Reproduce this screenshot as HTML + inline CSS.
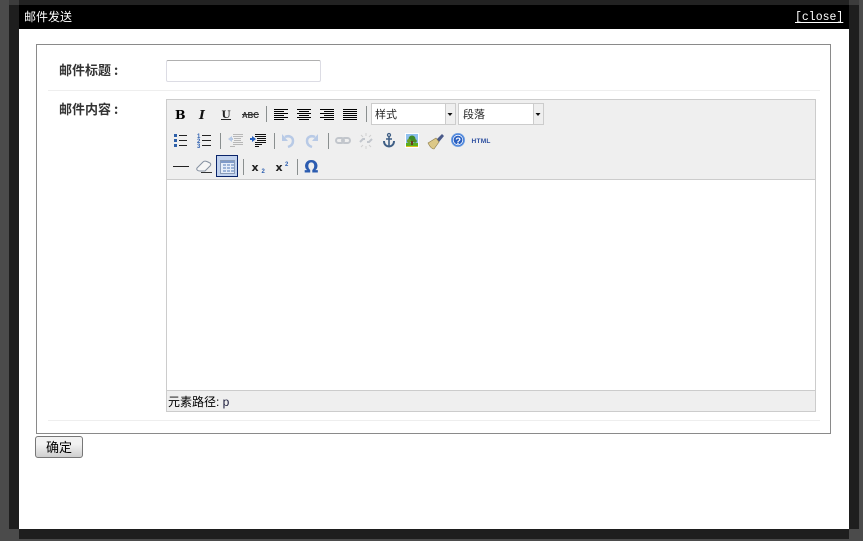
<!DOCTYPE html>
<html><head><meta charset="utf-8"><style>
html,body{margin:0;padding:0;width:863px;height:541px;overflow:hidden;background:#4b4b4b}
div,span{position:absolute;box-sizing:border-box}
body{font-family:"Liberation Sans","WenQuanYi Zen Hei","Noto Sans CJK SC",sans-serif;font-size:12px;color:#000}
.lb{font-family:"WenQuanYi Zen Hei","Noto Sans CJK SC",sans-serif;font-weight:bold;font-size:13px;color:#333;white-space:nowrap}
svg{position:absolute;left:0;top:0}
.s{font-family:"Liberation Sans",sans-serif;font-weight:bold}
.d{font-family:"DejaVu Serif",serif;font-weight:bold}
.j{font-family:"DejaVu Sans",sans-serif;font-weight:bold}
</style></head><body>
<div style="left:19px;top:0;width:830px;height:5px;background:#222"></div>
<div style="left:9px;top:5px;width:850px;height:524px;background:#1e1e1e"></div>
<div style="left:19px;top:529px;width:830px;height:10px;background:#1e1e1e"></div>
<div style="left:9px;top:0;width:10px;height:5px;background:#3c3c3c"></div>
<div style="left:849px;top:0;width:10px;height:5px;background:#3c3c3c"></div>
<div style="left:19px;top:5px;width:830px;height:24px;background:#000"></div>
<div style="left:19px;top:29px;width:830px;height:500px;background:#fff"></div>
<div style="left:24px;top:9px;color:#fff;font-size:12px;line-height:16px;white-space:nowrap">邮件发送</div>
<div style="left:795px;top:11px;color:#fff;font-family:'Liberation Mono',monospace;font-size:11.500px;line-height:14px;text-decoration:underline;text-underline-offset:2px;white-space:nowrap">[close]</div>

<div style="left:36px;top:44px;width:795px;height:390px;border:1px solid #8a8a8a;background:#fff"></div>
<div style="left:48px;top:90px;width:772px;height:1px;background:#eee"></div>
<div style="left:48px;top:420px;width:772px;height:1px;background:#eee"></div>
<div class="lb" style="left:59px;top:62px;line-height:16px">邮件标题</div><div class="lb" style="left:114px;top:62px;line-height:16px">:</div>
<div class="lb" style="left:59px;top:101px;line-height:16px">邮件内容</div><div class="lb" style="left:114px;top:101px;line-height:16px">:</div>
<div style="left:166px;top:60px;width:155px;height:22px;border:1px solid #dcdce4;border-top-color:#b0b0b0;border-radius:2px;background:#fff"></div>

<div style="left:166px;top:99px;width:650px;height:313px;border:1px solid #ccc;background:#fff"></div>
<div style="left:167px;top:100px;width:648px;height:80px;background:#efefef;border-bottom:1px solid #ccc"></div>
<div style="left:167px;top:390px;width:648px;height:21px;background:#efefef;border-top:1px solid #ccc"></div>
<div style="left:168px;top:394px;font-size:12px;line-height:16px;white-space:nowrap">元素路径: <span style="position:static;color:#1a1a3a">p</span></div>

<div style="left:371px;top:103px;width:85px;height:22px;border:1px solid #ccc;background:#fff"></div>
<div style="left:445px;top:104px;width:10px;height:20px;background:#efefef;border-left:1px solid #ccc"></div>
<div style="left:458px;top:103px;width:86px;height:22px;border:1px solid #ccc;background:#fff"></div>
<div style="left:533px;top:104px;width:10px;height:20px;background:#efefef;border-left:1px solid #ccc"></div>
<div style="left:375px;top:108px;font-size:11px;line-height:14px;color:#222">样式</div>
<div style="left:463px;top:108px;font-size:11px;line-height:14px;color:#222">段落</div>
<div style="left:216px;top:155px;width:22px;height:22px;border:1px solid #0a246a;background:#c1d2ee"></div>

<svg width="863" height="541" viewBox="0 0 863 541">
<g fill="#8a8f8f">
<rect x="266" y="106" width="1" height="16"/><rect x="366" y="106" width="1" height="16"/>
<rect x="220" y="133" width="1" height="16"/><rect x="274" y="133" width="1" height="16"/><rect x="328" y="133" width="1" height="16"/>
<rect x="243" y="159" width="1" height="16"/><rect x="297" y="159" width="1" height="16"/>
</g>
<!-- B I U ABC -->
<text class="d" x="175" y="119" font-size="12.500" fill="#000">B</text>
<text class="d" x="199" y="119" font-size="12.500" font-style="italic" fill="#111">I</text>
<text class="d" x="221.500" y="118" font-size="10.500" fill="#222">U</text>
<rect x="221" y="119" width="10" height="1" fill="#222"/>
<text class="s" x="242" y="118" font-size="7.800" fill="#333">ABC</text>
<rect x="242" y="114" width="17" height="1" fill="#333"/>
<!-- aligns -->
<g fill="#000">
<path d="M274 109h14v1h-14zM274 111h10v1h-10zM274 113h14v1h-14zM274 115h10v1h-10zM274 117h14v1h-14zM274 119h10v1h-10z"/>
<path d="M297 109h14v1h-14zM299 111h10v1h-10zM297 113h14v1h-14zM299 115h10v1h-10zM297 117h14v1h-14zM299 119h10v1h-10z"/>
<path d="M320 109h14v1h-14zM324 111h10v1h-10zM320 113h14v1h-14zM324 115h10v1h-10zM320 117h14v1h-14zM324 119h10v1h-10z"/>
<path d="M343 109h14v1h-14zM343 111h14v1h-14zM343 113h14v1h-14zM343 115h14v1h-14zM343 117h14v1h-14zM343 119h14v1h-14z"/>
</g>
<path d="M447.500 113h5l-2.500 3zM535.500 113h5l-2.500 3z" fill="#111"/>
<!-- lists -->
<g fill="#222"><path d="M179 135h8v1h-8zM179 140h8v1h-8zM179 145h8v1h-8zM202 135h9v1h-9zM202 140h9v1h-9zM202 145h9v1h-9z"/></g>
<g fill="#2d5fa8"><rect x="174" y="134" width="3" height="3"/><rect x="174" y="139" width="3" height="3"/><rect x="174" y="144" width="3" height="3"/></g>
<g class="s" font-size="6" fill="#2d5fb0"><text x="197" y="138">1</text><text x="197" y="143">2</text><text x="197" y="148">3</text></g>
<!-- outdent / indent -->
<g fill="#b8b8b8"><path d="M233 134h10v1h-10zM233 136h10v1h-10zM234 138h7v1h-7zM234 140h7v1h-7zM233 142h10v1h-10zM233 144h10v1h-10zM230 146h5v1h-5z"/></g>
<path d="M228 139l4-3v6z" fill="#b5c9e6"/><rect x="231" y="138" width="2" height="2" fill="#b5c9e6"/>
<g fill="#111"><path d="M255 134h11v1h-11zM255 136h11v1h-11zM257 138h9v1h-9zM257 140h9v1h-9zM255 142h11v1h-11zM255 144h7v1h-7zM255 146h4v1h-4z"/></g>
<path d="M256 139l-4-3v6z" fill="#2b63c0"/><rect x="250" y="138" width="3" height="2" fill="#2b63c0"/>
<!-- undo redo -->
<path d="M285 137c4-2 8 0 8 4 0 3-2 5-5 6" fill="none" stroke="#b8cae6" stroke-width="2.500"/><path d="M282 134v7h6z" fill="#b8cae6"/>
<path d="M315 137c-4-2-8 0-8 4 0 3 2 5 5 6" fill="none" stroke="#b8cae6" stroke-width="2.500"/><path d="M318 134v7h-6z" fill="#b8cae6"/>
<!-- link unlink -->
<g fill="none" stroke="#c2c6cc" stroke-width="2"><rect x="336" y="138" width="8" height="5" rx="2.500"/><rect x="342" y="138" width="8" height="5" rx="2.500"/>
<path d="M360 142l3-3h2M372 139l-3 3h-2"/></g>
<g stroke="#d0d0d0" stroke-width="1" fill="none"><path d="M361 135l2 2M366 133v3M371 135l-2 2M361 147l2-2M366 149v-3M371 147l-2-2"/></g>
<!-- anchor -->
<g fill="none" stroke="#3f5f85"><circle cx="389" cy="135" r="1.500" stroke-width="1.300"/><path d="M389 137v10M386 139h6" stroke-width="1.600"/><path d="M384 141c0 4 3 5.500 5 5.500s5-1.500 5-5.500" stroke-width="2"/></g>
<!-- image -->
<rect x="405" y="133" width="14" height="15" fill="#fff"/><rect x="406" y="134" width="12" height="9" fill="#8fc0ee"/><rect x="406" y="143" width="12" height="3" fill="#5cae1e"/><rect x="406" y="146" width="12" height="1" fill="#d8c020"/>
<circle cx="412" cy="139" r="3.500" fill="#3f8a28"/><circle cx="409" cy="141" r="2" fill="#6aa02a"/><circle cx="415" cy="141" r="1.800" fill="#4f8c20"/><rect x="411" y="141" width="2" height="4" fill="#6b3d1a"/>
<!-- cleanup broom -->
<path d="M436 140l6-6 2 2-5 6z" fill="#4a5a8a"/><path d="M428 143l8-5 3 4-5 7c-2 0-4-2-6-6z" fill="#dcc888" stroke="#8a7a4a" stroke-width=".6"/>
<!-- help -->
<circle cx="458" cy="140" r="6.500" fill="#3b78d8" stroke="#6d9de0" stroke-width="1"/><circle cx="458" cy="140" r="4.800" fill="#2a5fc0" stroke="#fff" stroke-width=".8"/>
<text class="s" x="455.300" y="144" font-size="9.500" fill="#fff">?</text>
<!-- html -->
<text class="s" x="471.500" y="143" font-size="6.600" fill="#2d4fa0" letter-spacing=".2">HTML</text>
<!-- hr -->
<rect x="173" y="166" width="16" height="1" fill="#222"/>
<!-- eraser -->
<path d="M197 168l6-6c1-1 3-1 5 0l2 1c1 1 1 2 0 3l-5 5h-5c-2 0-4-1-3-3z" fill="#f6f6f6" stroke="#8590a0" stroke-width="1"/>
<rect x="201" y="172" width="11" height="1" fill="#333"/>
<!-- table -->
<rect x="220.500" y="160.500" width="14" height="13" fill="#e6edf8" stroke="#8a9cb8" stroke-width="1"/>
<rect x="221" y="161" width="13" height="2" fill="#7f9ac8"/>
<path d="M223 164h3v2h-3zM227 164h3v2h-3zM231 164h3v2h-3zM223 167h3v2h-3zM227 167h3v2h-3zM231 167h3v2h-3zM223 170h3v2h-3zM227 170h3v2h-3zM231 170h3v2h-3z" fill="#9db4d8"/>
<!-- sub sup -->
<text class="j" x="251.500" y="171" font-size="11" fill="#222">x</text>
<text class="s" x="261.500" y="173" font-size="6" fill="#2d5fb0">2</text>
<text class="j" x="275.500" y="171" font-size="11" fill="#222">x</text>
<text class="s" x="285" y="166" font-size="6" fill="#2d5fb0">2</text>
<!-- omega -->
<text class="j" x="304.300" y="172.500" font-size="16.500" fill="#2c5cb0">Ω</text>
</svg>

<div style="left:35px;top:436px;width:48px;height:22px;border:1px solid #777;border-radius:3px;background:linear-gradient(#f2f2f2 0,#f2f2f2 35%,#cfcfcf 100%);text-align:center;font-size:13px;line-height:21px;color:#000">确定</div>
</body></html>
